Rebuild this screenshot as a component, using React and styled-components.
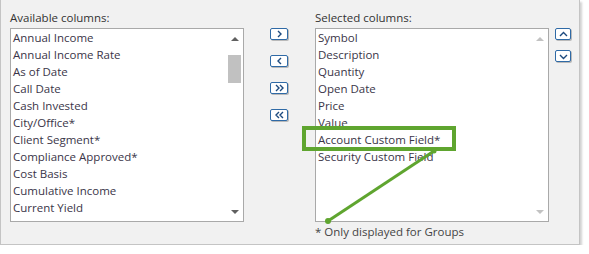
import React from 'react'
import styled, { createGlobalStyle } from 'styled-components'

const GlobalStyle = createGlobalStyle`
  * { margin: 0; padding: 0; box-sizing: border-box; }
  body { background: #fff; font-family: "Open Sans", "Noto Sans", sans-serif; }
`

const Panel = styled.div`
  position: relative;
  width: 580px;
  height: 245px;
  background: #f1f1f1;
  border-left: 1px solid #c4c4c4;
  border-right: 1px solid #c4c4c4;
  border-bottom: 1px solid #c4c4c4;
  box-shadow: 2px 2px 2px rgba(0, 0, 0, 0.18);
  padding: 9px 0 0 9px;
  display: flex;
  align-items: flex-start;
`

const Column = styled.div`
  width: 234px;
  display: flex;
  flex-direction: column;
`

const Label = styled.div`
  font-size: 11.5px;
  line-height: 18px;
  color: #333;
  height: 19px;
`

const ListBox = styled.div`
  position: relative;
  height: 194px;
  background: #fff;
  border: 1px solid #a9a9a9;
  overflow: hidden;
  padding: 0 18px 0 2px;
`

const Item = styled.div`
  font-size: 11.5px;
  line-height: 17px;
  height: 17px;
  color: #3a3548;
  white-space: nowrap;
`

const ScrollBar = styled.div`
  position: absolute;
  top: 0;
  right: 0;
  bottom: 0;
  width: 16px;
  background: #fff;
`

const Arrow = styled.div`
  position: absolute;
  left: 4px;
  width: 0;
  height: 0;
  border-left: 4px solid transparent;
  border-right: 4px solid transparent;
  ${p => p.$down
    ? `bottom: 7px; border-top: 4px solid ${p.$dim ? '#c2c2c2' : '#606060'};`
    : `top: 8px; border-bottom: 4px solid ${p.$dim ? '#c2c2c2' : '#606060'};`}
`

const Thumb = styled.div`
  position: absolute;
  left: 1px;
  top: 26px;
  width: 13px;
  height: 28px;
  background: #c1c1c1;
`

const MoveButtons = styled.div`
  width: 18px;
  margin: 19px 27px 0 26px;
  display: flex;
  flex-direction: column;
  gap: 15px;
`

const OrderButtons = styled.div`
  width: 16px;
  margin: 19px 0 0 6px;
  display: flex;
  flex-direction: column;
  gap: 10px;
`

const IconButton = styled.div`
  width: ${p => p.$w}px;
  height: 12px;
  background: #fff;
  border: 1px solid #2f6aa6;
  border-radius: 2px;
  box-shadow: 1px 1px 0 #b9b9b9;
  display: flex;
  align-items: center;
  justify-content: center;
  svg { display: block; }
`

const Footnote = styled.div`
  font-size: 11.5px;
  line-height: 18px;
  color: #444;
  margin-top: 1px;
`

const Overlay = styled.svg`
  position: absolute;
  left: 0;
  top: 0;
  pointer-events: none;
`

const glyphs = {
  right: 'M3 1 L6 4 L3 7',
  left: 'M6 1 L3 4 L6 7',
  rightAll: 'M1 1 L4 4 L1 7 M5 1 L8 4 L5 7',
  leftAll: 'M4 1 L1 4 L4 7 M8 1 L5 4 L8 7',
  up: 'M1 6 L4.5 2.5 L8 6',
  down: 'M1 3 L4.5 6.5 L8 3'
}

const Btn = ({ kind, w }) => (
  <IconButton $w={w}>
    <svg width="9" height="8" viewBox="0 0 9 8">
      <path d={glyphs[kind]} fill="none" stroke="#1d4a7e" strokeWidth="1.4" />
    </svg>
  </IconButton>
)

const available = [
  'Annual Income', 'Annual Income Rate', 'As of Date', 'Call Date', 'Cash Invested',
  'City/Office*', 'Client Segment*', 'Compliance Approved*', 'Cost Basis',
  'Cumulative Income', 'Current Yield', 'CUSIP'
]

const selected = [
  'Symbol', 'Description', 'Quantity', 'Open Date', 'Price', 'Value',
  'Account Custom Field*', 'Security Custom Field'
]

export default function App() {
  return (
    <>
      <GlobalStyle />
      <Panel>
        <Column>
          <Label>Available columns:</Label>
          <ListBox>
            {available.map(a => <Item key={a}>{a}</Item>)}
            <ScrollBar>
              <Arrow />
              <Thumb />
              <Arrow $down />
            </ScrollBar>
          </ListBox>
        </Column>
        <MoveButtons>
          <Btn kind="right" w={18} />
          <Btn kind="left" w={18} />
          <Btn kind="rightAll" w={18} />
          <Btn kind="leftAll" w={18} />
        </MoveButtons>
        <Column>
          <Label>Selected columns:</Label>
          <ListBox>
            {selected.map(s => <Item key={s}>{s}</Item>)}
            <ScrollBar>
              <Arrow $dim />
              <Arrow $down $dim />
            </ScrollBar>
          </ListBox>
          <Footnote>* Only displayed for Groups</Footnote>
        </Column>
        <OrderButtons>
          <Btn kind="up" w={16} />
          <Btn kind="down" w={16} />
        </OrderButtons>
        <Overlay width="580" height="245">
          <rect x="303" y="128" width="150" height="21" fill="none" stroke="#5fa52f" strokeWidth="4" />
          <line x1="433" y1="151" x2="327" y2="221" stroke="#5fa52f" strokeWidth="3" />
          <circle cx="433" cy="151" r="2.5" fill="#5fa52f" />
          <circle cx="327" cy="221" r="3" fill="#5fa52f" />
        </Overlay>
      </Panel>
    </>
  )
}
